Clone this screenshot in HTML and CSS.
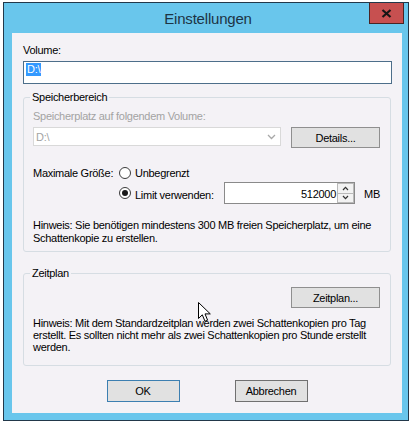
FILE: index.html
```html
<!DOCTYPE html>
<html>
<head>
<meta charset="utf-8">
<title>Einstellungen</title>
<link rel="stylesheet" href="styles.css">
</head>
<body>
<div class="window">
  <div class="titlebar">
    <span class="tb-spacer"></span>
    <div class="title">Einstellungen</div>
    <div class="close-wrap">
      <div class="close">
        <svg width="11" height="9" viewBox="0 0 11 9"><path d="M1.5 1 L9.5 8 M9.5 1 L1.5 8" stroke="#151515" stroke-width="2.2" fill="none"/></svg>
      </div>
    </div>
  </div>
  <div class="client">
    <div class="label">Volume:</div>
    <div class="textbox"><span class="sel">D:\</span></div>

    <fieldset class="group g1">
      <legend>Speicherbereich</legend>
      <div class="muted">Speicherplatz auf folgendem Volume:</div>
      <div class="row-combo">
        <div class="combo">
          <span>D:\</span>
          <svg width="9" height="6" viewBox="0 0 9 6"><path d="M1 1 L4.5 4.5 L8 1" stroke="#a8a8a8" stroke-width="1.3" fill="none"/></svg>
        </div>
        <div class="btn">Details...</div>
      </div>
      <div class="size-row r1">
        <span class="size-label">Maximale Größe:</span>
        <span class="radio"></span>
        <span class="rtext">Unbegrenzt</span>
      </div>
      <div class="size-row r2">
        <span class="size-label"></span>
        <span class="radio on"></span>
        <span class="rtext limit">Limit verwenden:</span>
        <div class="num">
          <span class="val">512000</span>
          <div class="spin">
            <div class="spin-btn"><svg width="7" height="5" viewBox="0 0 7 5"><path d="M1 4 L3.5 1.3 L6 4" stroke="#333" stroke-width="1.2" fill="none"/></svg></div>
            <div class="spin-btn"><svg width="7" height="5" viewBox="0 0 7 5"><path d="M1 1 L3.5 3.7 L6 1" stroke="#333" stroke-width="1.2" fill="none"/></svg></div>
          </div>
        </div>
        <span class="mb">MB</span>
      </div>
      <p class="hint h1">Hinweis: Sie benötigen mindestens 300 MB freien Speicherplatz, um eine<br>Schattenkopie zu erstellen.</p>
    </fieldset>

    <fieldset class="group g2">
      <legend>Zeitplan</legend>
      <div class="btn-row"><div class="btn">Zeitplan...</div></div>
      <p class="hint h2">Hinweis: Mit dem Standardzeitplan werden zwei Schattenkopien pro Tag<br>erstellt. Es sollten nicht mehr als zwei Schattenkopien pro Stunde erstellt<br>werden.</p>
    </fieldset>

    <div class="actions">
      <div class="btn dlg default">OK</div>
      <div class="btn dlg">Abbrechen</div>
    </div>

    <svg class="cursor" width="14" height="21" viewBox="0 0 14 21"><path d="M0.5 0.5 L0.5 16.5 L4.3 12.8 L7 19.3 L9.6 18.2 L7 11.9 L12.3 11.9 Z" fill="#fff" stroke="#000" stroke-width="1" stroke-linejoin="miter"/></svg>
  </div>
</div>
</body>
</html>
```
FILE: styles.css
```css
* { box-sizing: border-box; }
html, body { margin: 0; }
body {
  width: 411px;
  height: 423px;
  overflow: hidden;
  background: #ffffff;
  padding: 2px 0 0 3px;
  font-family: "Liberation Sans", Arial, sans-serif;
  font-size: 11px;
  letter-spacing: -0.28px;
  color: #000;
}
.window {
  width: 406px;
  height: 419px;
  border: 1px solid #22384a;
  background: #69c6ec;
  display: flex;
  flex-direction: column;
  padding: 0 6px 7px 8px;
}
.titlebar {
  height: 30px;
  flex: none;
  display: grid;
  grid-template-columns: 1fr auto 1fr;
  margin-right: -2px;
}
.title {
  align-self: center;
  font-size: 15px;
  letter-spacing: -0.2px;
  color: #1d3445;
  line-height: 18px;
  padding-top: 1px;
}
.close-wrap { display: flex; justify-content: flex-end; align-items: flex-start; }
.close {
  width: 35px;
  height: 21px;
  background: #c75050;
  border: 1px solid #4a2424;
  border-top: none;
  display: flex;
  align-items: center;
  justify-content: center;
}
.client {
  flex: 1;
  background: #f4f2f6;
  padding: 11px 10px 0 11px;
  display: flex;
  flex-direction: column;
  position: relative;
}
.label { line-height: 13px; }
.textbox {
  margin-top: 4px;
  height: 23px;
  border: 1px solid #4d6e8a;
  background: #fff;
  padding: 1px 2px;
}
.sel {
  display: inline-block;
  background: #3399ff;
  color: #fff;
  line-height: 13px;
  padding: 0 1px;
}
.group {
  margin: 6px 0 0 0;
  width: 368px;
  min-width: 0;
  border: 1px solid #d6dde3;
  border-radius: 3px;
  padding: 6px 10px 6px 9px;
}
.group legend {
  padding: 0 2px;
  margin-left: -3px;
  line-height: 14px;
}
.muted { color: #a3a3a3; line-height: 13px; }
.row-combo {
  margin-top: 4px;
  display: flex;
  gap: 10px;
  align-items: flex-start;
}
.combo {
  width: 248px;
  height: 19px;
  background: #fff;
  border: 1px solid #d9d9d9;
  color: #a3a3a3;
  padding: 0 4px 0 2px;
  display: flex;
  align-items: center;
  justify-content: space-between;
}
.btn {
  width: 89px;
  height: 21px;
  background: #e1e1e1;
  border: 1px solid #8f8f8f;
  display: flex;
  align-items: center;
  justify-content: center;
}
.size-row { display: flex; align-items: center; }
.r1 { margin-top: 18px; height: 14px; }
.r2 { margin-top: 2px; height: 22px; }
.size-label { width: 86px; flex: none; }
.radio {
  width: 12px;
  height: 12px;
  border-radius: 50%;
  border: 1px solid #3c3c3c;
  background: #fff;
  flex: none;
  margin-right: 4px;
  display: flex;
  align-items: center;
  justify-content: center;
}
.radio.on::after {
  content: "";
  width: 6px;
  height: 6px;
  border-radius: 50%;
  background: #1a1a1a;
}
.limit { width: 89px; flex: none; padding-top: 3px; }
.num {
  width: 134px;
  height: 22px;
  border: 1px solid #8a8a8a;
  background: #fff;
  display: flex;
  justify-content: flex-end;
  align-items: stretch;
}
.val { align-self: center; padding-right: 1px; padding-top: 1px; }
.spin { width: 17px; display: flex; flex-direction: column; }
.spin-btn {
  flex: 1;
  border: 1px solid #b9b9b9;
  background: #f2f2f2;
  display: flex;
  align-items: center;
  justify-content: center;
}
.spin-btn + .spin-btn { border-top: none; }
.mb { margin-left: 9px; padding-top: 2px; }
.hint { margin: 0; line-height: 13px; white-space: nowrap; }
.h1 { margin-top: 15px; }
.g2 { margin-top: 14px; padding-bottom: 12px; }
.btn-row { display: flex; justify-content: flex-end; margin-top: 1px; }
.h2 { margin-top: 9px; line-height: 12px; }
.actions {
  margin-top: 14px;
  display: flex;
  justify-content: center;
  gap: 55px;
  padding-right: 1px;
}
.btn.dlg { width: 73px; height: 22px; border-color: #707070; }
.btn.dlg.default { border-color: #3c7fb1; }
.cursor { position: absolute; left: 186px; top: 269px; }
```
